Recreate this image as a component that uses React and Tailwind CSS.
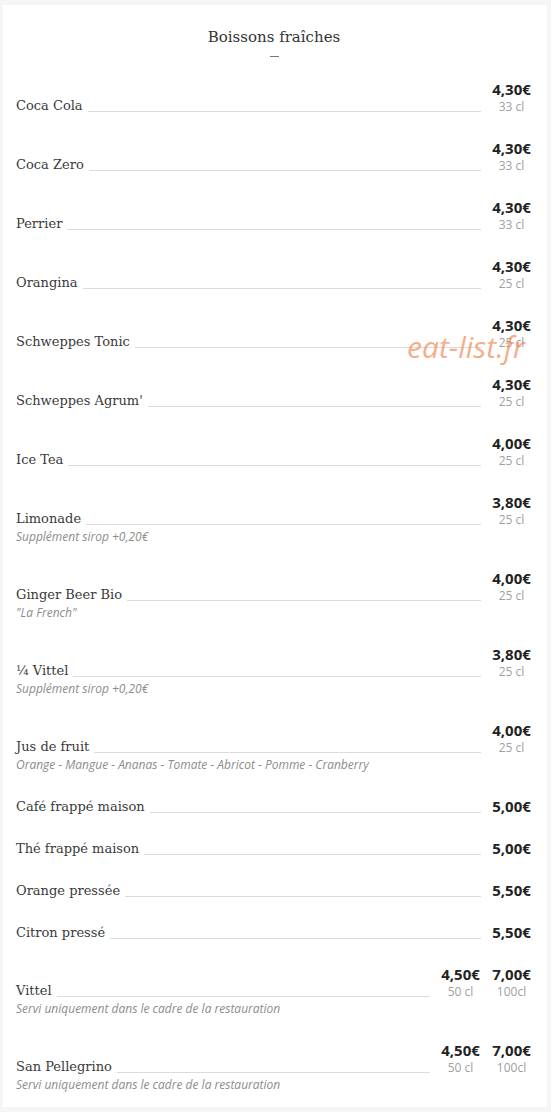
import React from "react";

const items = [
  { name: "Coca Cola", prices: [["4,30€", "33 cl"]] },
  { name: "Coca Zero", prices: [["4,30€", "33 cl"]] },
  { name: "Perrier", prices: [["4,30€", "33 cl"]] },
  { name: "Orangina", prices: [["4,30€", "25 cl"]] },
  { name: "Schweppes Tonic", prices: [["4,30€", "25 cl"]] },
  { name: "Schweppes Agrum'", prices: [["4,30€", "25 cl"]] },
  { name: "Ice Tea", prices: [["4,00€", "25 cl"]] },
  { name: "Limonade", prices: [["3,80€", "25 cl"]], desc: "Supplément sirop +0,20€" },
  { name: "Ginger Beer Bio", prices: [["4,00€", "25 cl"]], desc: "\"La French\"" },
  { name: "¼ Vittel", prices: [["3,80€", "25 cl"]], desc: "Supplément sirop +0,20€" },
  {
    name: "Jus de fruit",
    prices: [["4,00€", "25 cl"]],
    desc: "Orange - Mangue - Ananas - Tomate - Abricot - Pomme - Cranberry",
  },
  { name: "Café frappé maison", prices: [["5,00€"]] },
  { name: "Thé frappé maison", prices: [["5,00€"]] },
  { name: "Orange pressée", prices: [["5,50€"]] },
  { name: "Citron pressé", prices: [["5,50€"]] },
  {
    name: "Vittel",
    prices: [["4,50€", "50 cl"], ["7,00€", "100cl"]],
    desc: "Servi uniquement dans le cadre de la restauration",
  },
  {
    name: "San Pellegrino",
    prices: [["4,50€", "50 cl"], ["7,00€", "100cl"]],
    desc: "Servi uniquement dans le cadre de la restauration",
  },
];

const slab = { fontFamily: '"DejaVu Serif", serif' };
const sans = { fontFamily: '"Open Sans", sans-serif' };

function Row({ name, prices, desc }) {
  const withSize = prices[0].length > 1;
  return (
    <div className={withSize ? "mb-[23px]" : "mb-[22px]"}>
      <div className="flex items-end">
        <span style={slab} className="text-[13px] leading-[18px] text-[#3a3a3a] whitespace-nowrap">
          {name}
        </span>
        <div className="flex-1 h-px bg-[#dcdcdc] ml-[5px] mr-[10px] mb-[3px]" />
        <div className="flex gap-[10px]">
          {prices.map(([p, s]) => (
            <div key={p + s} style={sans} className="w-[41px] text-center">
              <div className="text-[15px] leading-[20px] font-bold text-[#222] whitespace-nowrap">{p}</div>
              {s && <div className="text-[12px] leading-[16px] text-[#a0a0a0] whitespace-nowrap">{s}</div>}
            </div>
          ))}
        </div>
      </div>
      {desc && (
        <div style={sans} className="text-[12px] leading-[17px] italic text-[#8c8c8c]">
          {desc}
        </div>
      )}
    </div>
  );
}

export default function App() {
  return (
    <div className="min-h-screen bg-[#f5f5f5] pt-[5px] px-[3px] pb-[5px]">
      <div className="relative bg-white h-[1102px] w-[544px] pl-[13px] pr-[15px]">
        <div className="pt-[20px] text-center">
          <h2 style={slab} className="text-[15px] leading-[24px] font-light text-[#333]">
            Boissons fraîches
          </h2>
          <div className="mx-auto mt-[7px] w-[9px] h-px bg-[#777]" />
        </div>
        <div className="pt-[22px]">
          {items.map((it) => (
            <Row key={it.name} {...it} />
          ))}
        </div>
        <div
          style={sans}
          className="absolute left-[404px] top-[319px] text-[30px] italic text-[#f08a55]/70 pointer-events-none"
        >
          eat-list.fr
        </div>
      </div>
    </div>
  );
}
